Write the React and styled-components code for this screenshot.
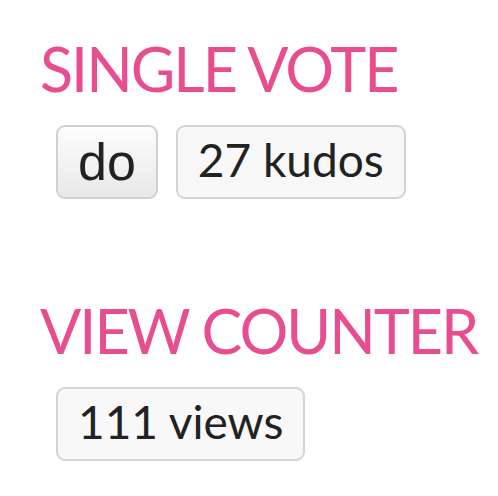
import React from "react";
import styled, { createGlobalStyle } from "styled-components";

const Global = createGlobalStyle`
  html, body { margin: 0; padding: 0; background: #fff; }
  body { font-family: Lato, "Noto Sans", sans-serif; }
`;

const Page = styled.div`
  display: flex;
  flex-direction: column;
  padding: 38px 0 0 40px;
`;

const Section = styled.section`
  display: flex;
  flex-direction: column;
  margin-bottom: ${(p) => p.$gap || 0}px;
`;

const Heading = styled.h2`
  margin: 0 0 26px 0;
  font-family: Lato, "Noto Sans", sans-serif;
  font-weight: 400;
  font-size: 61px;
  line-height: 61px;
  letter-spacing: -2px;
  color: #e84e8f;
  white-space: nowrap;
`;

const Row = styled.div`
  display: flex;
  align-items: flex-start;
  gap: 18px;
  padding-left: 16px;
`;

const Counter = styled.div`
  box-sizing: border-box;
  height: 74px;
  padding: 5px 20px 0;
  border: 2px solid #d4d4d4;
  border-radius: 9px;
  font-family: Lato, "Noto Sans", sans-serif;
  font-size: 46px;
  line-height: 55px;
  color: #222;
  background: #f8f8f8;
  white-space: nowrap;
`;

const VoteButton = styled.button`
  box-sizing: border-box;
  height: 74px;
  margin: 0;
  padding: 6px 20px 0;
  border: 2px solid #d0d0d0;
  border-radius: 9px;
  font-family: "Liberation Sans", Arial, sans-serif;
  font-size: 52px;
  line-height: 58px;
  color: #222;
  background: linear-gradient(#fdfdfd, #e8e8e8);
  display: flex;
  align-items: flex-start;
  cursor: pointer;
`;

export default function App() {
  return (
    <>
      <Global />
      <Page>
        <Section $gap={101}>
          <Heading>SINGLE VOTE</Heading>
          <Row>
            <VoteButton>do</VoteButton>
            <Counter>27 kudos</Counter>
          </Row>
        </Section>
        <Section>
          <Heading>VIEW COUNTER</Heading>
          <Row>
            <Counter>111 views</Counter>
          </Row>
        </Section>
      </Page>
    </>
  );
}
